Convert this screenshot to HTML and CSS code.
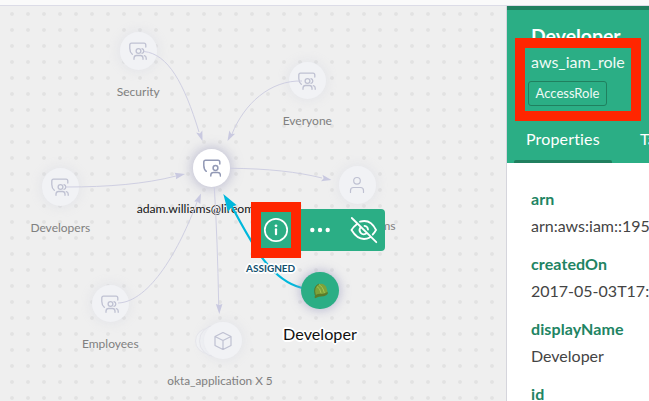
FILE: index.html
```html
<!DOCTYPE html>
<html lang="en">
<head>
<meta charset="utf-8">
<title>Graph</title>
<link rel="stylesheet" href="styles.css">
</head>
<body>
<svg width="0" height="0" class="defs">
  <defs>
    <g id="shield"><path d="M16.800 5V3Q16.800 1.200 15 1.200H2.500Q.8 1.200 .8 3V6.500Q.8 10.300 3.300 12.300"/></g>
    <g id="group" fill="none" stroke="currentColor" stroke-width="1.300" stroke-linecap="round">
      <use href="#shield"/>
      <circle cx="9.500" cy="9" r="2.400"/><path d="M13 6.600a2.500 2.500 0 0 1 0 4.800M5 17.300V16Q5.200 13.500 7.500 13.500H11.500Q13.800 13.500 14 16V17.300M15.300 13.600Q17.100 14 17.200 16V17.300"/>
    </g>
    <g id="user" fill="none" stroke="currentColor" stroke-width="1.500" stroke-linecap="round">
      <use href="#shield"/>
      <circle cx="12.500" cy="9" r="2.400"/><path d="M7.800 17V16Q8 13.500 10.400 13.500H14.800Q17.200 13.500 17.400 16V17"/>
    </g>
  </defs>
</svg>
<div class="app">
  <header class="topbar"></header>
  <div class="body">
    <main class="graph">
      <div class="node faded" style="left:138.300px;top:45px"><svg class="icon" viewBox="0 0 18 18"><use href="#group"/></svg><span class="label">Security</span></div>
      <div class="node faded raised" style="left:307.300px;top:74.500px"><svg class="icon" viewBox="0 0 18 18"><use href="#group"/></svg><span class="label">Everyone</span></div>
      <div class="node faded" style="left:60.300px;top:181px"><svg class="icon" viewBox="0 0 18 18"><use href="#group"/></svg><span class="label">Developers</span></div>
      <div class="node faded raised" style="left:110.300px;top:297.500px"><svg class="icon" viewBox="0 0 18 18"><use href="#group"/></svg><span class="label">Employees</span></div>
      <div class="node faded person" style="left:357.300px;top:179px"><svg class="icon" viewBox="0 0 18 18" fill="none" stroke="currentColor" stroke-width="1.200" stroke-linecap="round"><circle cx="9" cy="4.800" r="3.300"/><path d="M2.500 16.500V14.500Q2.500 11.500 5.500 11.500H12.500Q15.500 11.500 15.500 14.500V16.500"/></svg><span class="label">adam.williams</span></div>
      <div class="ghost" style="left:208px;top:334.500px"></div>
      <div class="ghost front" style="left:215px;top:334.500px"></div>
      <div class="node faded stack" style="left:223px;top:334.500px"><svg class="icon" viewBox="0 0 18 18" fill="none" stroke="currentColor" stroke-width="1.200" stroke-linejoin="round"><path d="M9 .5L17 4.500V13.500L9 17.500L1 13.500V4.500ZM1 4.500L9 8.500L17 4.500M9 8.500V17.500"/></svg><span class="label">okta_application X 5</span></div>
      <div class="node center" style="left:211.500px;top:162px"><svg class="icon" viewBox="0 0 18 18"><use href="#user"/></svg><span class="label">adam.williams@lireom</span></div>
      <svg class="edges" viewBox="0 6 506 395">
        <g fill="none" stroke="#cfcfe2" stroke-width="1">
          <path d="M144 51.500C168 54 184 83 199 132"/>
          <path d="M302 81C270 80 244 104 232 134"/>
          <path d="M66 187C108 187 145 184 176 176"/>
          <path d="M118 303C150 302 180 248 197 202"/>
          <path d="M230 168.300C268 168.500 298 172 322 178"/>
          <path d="M214.300 187Q217.500 240 218.700 305"/>
        </g>
        <g fill="#c9c9e0">
          <path d="M0 0L-10-3.300L-8 0L-10 3.300Z" transform="translate(202.500 141) rotate(71)"/>
          <path d="M0 0L-10-3.300L-8 0L-10 3.300Z" transform="translate(227.500 141) rotate(118)"/>
          <path d="M0 0L-10-3.300L-9 0L-10 3.300Z" transform="translate(185 174) rotate(-12)"/>
          <path d="M0 0L-10-3.300L-9 0L-10 3.300Z" transform="translate(201 193.500) rotate(-68)"/>
          <path d="M0 0L-10-3.300L-8 0L-10 3.300Z" transform="translate(331.500 180) rotate(12)"/>
          <path d="M0 0L-10-3.300L-9 0L-10 3.300Z" transform="translate(219.300 314) rotate(89)"/>
        </g>
        <path d="M302 288C270 280 252 244 231 205" fill="none" stroke="#00b8dc" stroke-width="2.200"/>
        <path d="M223.300 194L236.500 205L231.500 207L228 212Z" fill="#00b8dc"/>
      </svg>
      <span class="edge-label">ASSIGNED</span>
      <div class="node active" style="left:320px;top:284.500px">
        <svg class="helmet" viewBox="0 0 18 15"><g transform="rotate(-14 9 8)"><path d="M2.500 11Q2.500 1.500 9 .5Q15.500 .5 16 7V11L12 13Z" fill="#7da239"/><path d="M2.500 11Q6.500 10 10 11.500Q13.500 12 16 10.500V12.500Q14 14.500 11 14.200Q6 12.800 1.500 14Q.8 12.500 2.500 11Z" fill="#5c7a28"/><path d="M9 1Q12.500 4 12.500 11M6.500 2.500Q9.500 5 9 10.500" fill="none" stroke="#a9c653" stroke-width=".9"/><path d="M2.500 11Q2.500 1.500 9 .5" fill="none" stroke="#4f6b22" stroke-width=".8"/></g></svg>
        <span class="label">Developer</span>
      </div>
      <div class="toolbar">
        <svg width="44" height="42" viewBox="0 0 44 42" fill="none" stroke="#fff" stroke-width="1.700" stroke-linecap="round"><circle cx="21" cy="21" r="11.200"/><path d="M21 20.300V25.200" stroke-width="2.200"/><circle cx="21" cy="16.800" r="1.400" fill="#fff" stroke="none"/></svg>
        <svg width="44" height="42" viewBox="0 0 44 42" fill="#fff"><circle cx="13.300" cy="21" r="2.200"/><circle cx="21" cy="21" r="2.200"/><circle cx="28.700" cy="21" r="2.200"/></svg>
        <svg width="42" height="42" viewBox="0 0 42 42" fill="none" stroke="#fff" stroke-width="1.800" stroke-linecap="round"><path d="M13.500 15.500Q10.500 17.700 8.500 21Q14 30 21 30Q24 30 26.800 28.500M17 12.700Q27.500 9.500 33 21Q31.500 23.700 29.700 25.500M17.200 18.700A4.300 4.300 0 0 0 22.800 24.800M21.500 16.800A4 4 0 0 1 25 20.500M8.800 9L33.300 33.200"/></svg>
      </div>
      <div class="mark mark-info"></div>
    </main>
    <aside class="panel">
      <div class="panel-head">
        <h1>Developer</h1>
        <div class="type">aws_iam_role</div>
        <span class="chip">AccessRole</span>
        <nav class="tabs"><span class="tab selected">Properties</span><span class="tab">Tags</span></nav>
        <div class="mark mark-type"></div>
      </div>
      <dl class="props">
        <dt>arn</dt><dd>arn:aws:iam::195</dd>
        <dt>createdOn</dt><dd>2017-05-03T17:</dd>
        <dt>displayName</dt><dd>Developer</dd>
        <dt>id</dt>
      </dl>
    </aside>
  </div>
</div>
</body>
</html>
```

FILE: styles.css
```css
* { box-sizing: border-box; }
body { margin: 0; font-family: Lato, sans-serif; overflow: hidden; }
.defs { position: absolute; }
.app { width: 649px; height: 401px; display: flex; flex-direction: column; overflow: hidden; }
.topbar { height: 6px; flex: none; background: #fafafa; border-bottom: 1px solid #dcdce7; }
.body { flex: 1; display: grid; grid-template-columns: 506px 143px; min-height: 0; }
.graph {
  position: relative; overflow: hidden; background-color: #efefef;
  background-image: radial-gradient(circle, #e2e2e2 1.400px, rgba(226,226,226,0) 2.300px);
  background-size: 16px 16px; background-position: 4px 0;
}
.node {
  position: absolute; width: 37.400px; height: 37.400px; margin: -18.700px 0 0 -18.700px;
  border-radius: 50%; display: flex; align-items: center; justify-content: center;
  background: #fff; color: #9299b5;
}
.icon { width: 18px; height: 18px; }
.faded { background: #f1f2f5; color: #bfc1d2; box-shadow: 0 0 10px 2px rgba(200,202,220,.25); }
.center { box-shadow: 0 0 11px 2px rgba(150,150,185,.5); }
.label {
  position: absolute; top: 52px; left: 50%; transform: translateX(-50%);
  font-size: 12px; line-height: 16px; white-space: nowrap; color: #808080;
}
.raised .label { top: 51px; }
.person .label { font-size: 12.300px; margin-left: 1px; }
.stack .label { font-size: 11.800px; margin-left: -3px; top: 51px; }
.center .label { left: -56.200px; transform: none; color: #151515; font-size: 12.200px; }
.ghost {
  position: absolute; width: 26px; height: 26px; margin: -13px 0 0 -13px; border-radius: 50%;
  background: #f2f3f5; border: 1px solid #e7e7ec;
}
.front { width: 32px; height: 32px; margin: -16px 0 0 -16px; }
.edges { position: absolute; left: 0; top: 0; width: 506px; height: 395px; }
.active { background: #2bae85; box-shadow: 0 0 10px 2px rgba(150,150,190,.5); }
.active .label {
  font-size: 16.200px; line-height: 20px; top: 52px; color: #111;
  text-shadow: 2px 0 #fff, -2px 0 #fff, 0 2px #fff, 0 -2px #fff, 1px 1px #fff, -1px -1px #fff, 1px -1px #fff, -1px 1px #fff;
}
.helmet { width: 17px; height: 15px; overflow: visible; }
.edge-label {
  position: absolute; left: 246px; top: 255px; font-size: 10px; line-height: 14px; font-weight: 700; color: #11506e;
  text-shadow: 2px 0 #fff, -2px 0 #fff, 0 2px #fff, 0 -2px #fff, 1px 1px #fff, -1px -1px #fff, 1px -1px #fff, -1px 1px #fff;
}
.toolbar {
  position: absolute; left: 255px; top: 203px; width: 130px; height: 42px;
  display: flex; background: #2bae85; border-radius: 4px;
}
.mark { position: absolute; border: 10px solid #ff2600; }
.mark-info { left: 251px; top: 196px; width: 50px; height: 56px; }
.panel { border-left: 1px solid #d5d5dc; background: #fff; overflow: hidden; }
.panel-head {
  position: relative; height: 157px; padding: 14px 0 0 24px; border-top: 4px solid #20805f;
  background: #2bae85; color: #fff; display: flex; flex-direction: column; align-items: flex-start;
}
h1 { margin: 0; font-size: 19.400px; line-height: 24px; font-weight: 700; }
.type { font-size: 16px; line-height: 20px; margin-top: 4px; color: #effaf6; }
.chip {
  margin: 9px 0 0 -3px; width: 79px; height: 25px; border: 1px solid #20805f; border-radius: 3px;
  font-size: 13px; line-height: 23px; text-align: center; color: #effaf6;
}
.tabs { display: flex; gap: 16px; margin: auto 0 0 -17px; }
.tab { height: 34px; padding: 0 12px; font-size: 16px; line-height: 20px; letter-spacing: .15px; white-space: nowrap; }
.selected { width: 98px; position: relative; }
.selected::after {
  content: ""; position: absolute; left: 0; bottom: 0; width: 98px; height: 3px;
  background: #20805f; border-radius: 2px 2px 0 0;
}
.mark-type { left: 8px; top: 28px; width: 126px; height: 83px; }
.props { margin: 0; padding: 26px 0 0 24px; font-size: 16px; line-height: 20px; white-space: nowrap; }
dt { font-weight: 700; color: #218463; letter-spacing: .1px; }
dd { margin: 7px 0 18px; color: #444; }
```
